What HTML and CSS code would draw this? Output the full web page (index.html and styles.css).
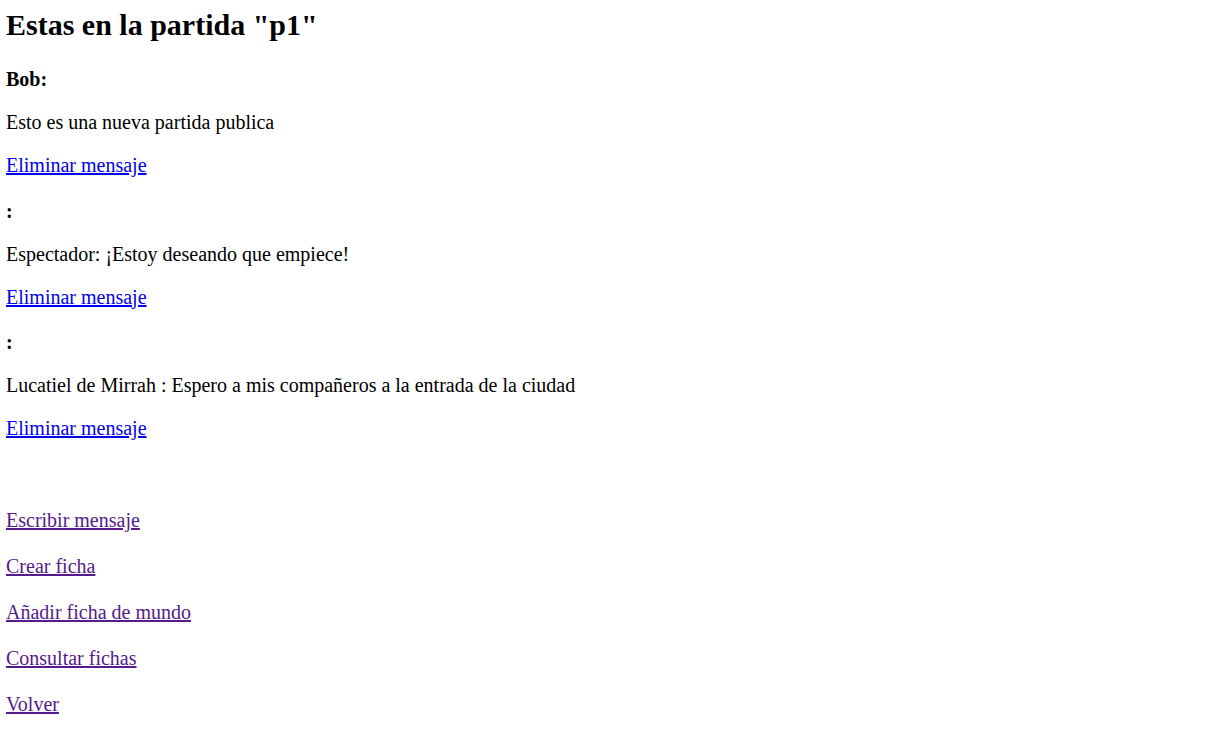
FILE: index.html
```html
<!DOCTYPE html>
<html lang="es">
<head>
<meta charset="utf-8">
<title>Partida p1</title>
<link rel="stylesheet" href="styles.css">
</head>
<body>
<h1 class="title">Estas en la partida "p1"</h1>
<div class="messages">
  <div class="message">
    <p class="author">Bob:</p>
    <p class="text">Esto es una nueva partida publica</p>
    <p class="line"><a class="link" href="#">Eliminar mensaje</a></p>
  </div>
  <div class="message">
    <p class="author">:</p>
    <p class="text">Espectador: ¡Estoy deseando que empiece!</p>
    <p class="line"><a class="link" href="#">Eliminar mensaje</a></p>
  </div>
  <div class="message">
    <p class="author">:</p>
    <p class="text">Lucatiel de Mirrah : Espero a mis compañeros a la entrada de la ciudad</p>
    <p class="line"><a class="link" href="#">Eliminar mensaje</a></p>
  </div>
</div>
<div class="actions">
  <p class="action"><a class="link visited" href="#">Escribir mensaje</a></p>
  <p class="action"><a class="link visited" href="#">Crear ficha</a></p>
  <p class="action"><a class="link visited" href="#">Añadir ficha de mundo</a></p>
  <p class="action"><a class="link visited" href="#">Consultar fichas</a></p>
  <p class="action"><a class="link visited" href="#">Volver</a></p>
</div>
</body>
</html>
```
FILE: styles.css
```css
html, body {
  background: #fff;
}
body {
  margin: 0;
  padding: 0 6px;
  font-family: "Liberation Serif", "Times New Roman", serif;
  font-size: 20px;
  color: #000;
}
.title {
  font-size: 30px;
  font-weight: bold;
  margin: 8px 0 26px;
}
.messages {
  margin: 0;
}
.message p {
  margin: 20px 0;
}
.message + .message {
  margin-top: 22.5px;
}
.author {
  font-weight: bold;
}
.actions {
  margin-top: 69px;
}
.action {
  margin: 23px 0;
}
.link {
  color: #0000ee;
  text-decoration: underline;
}
.link.visited {
  color: #551a8b;
}
```
